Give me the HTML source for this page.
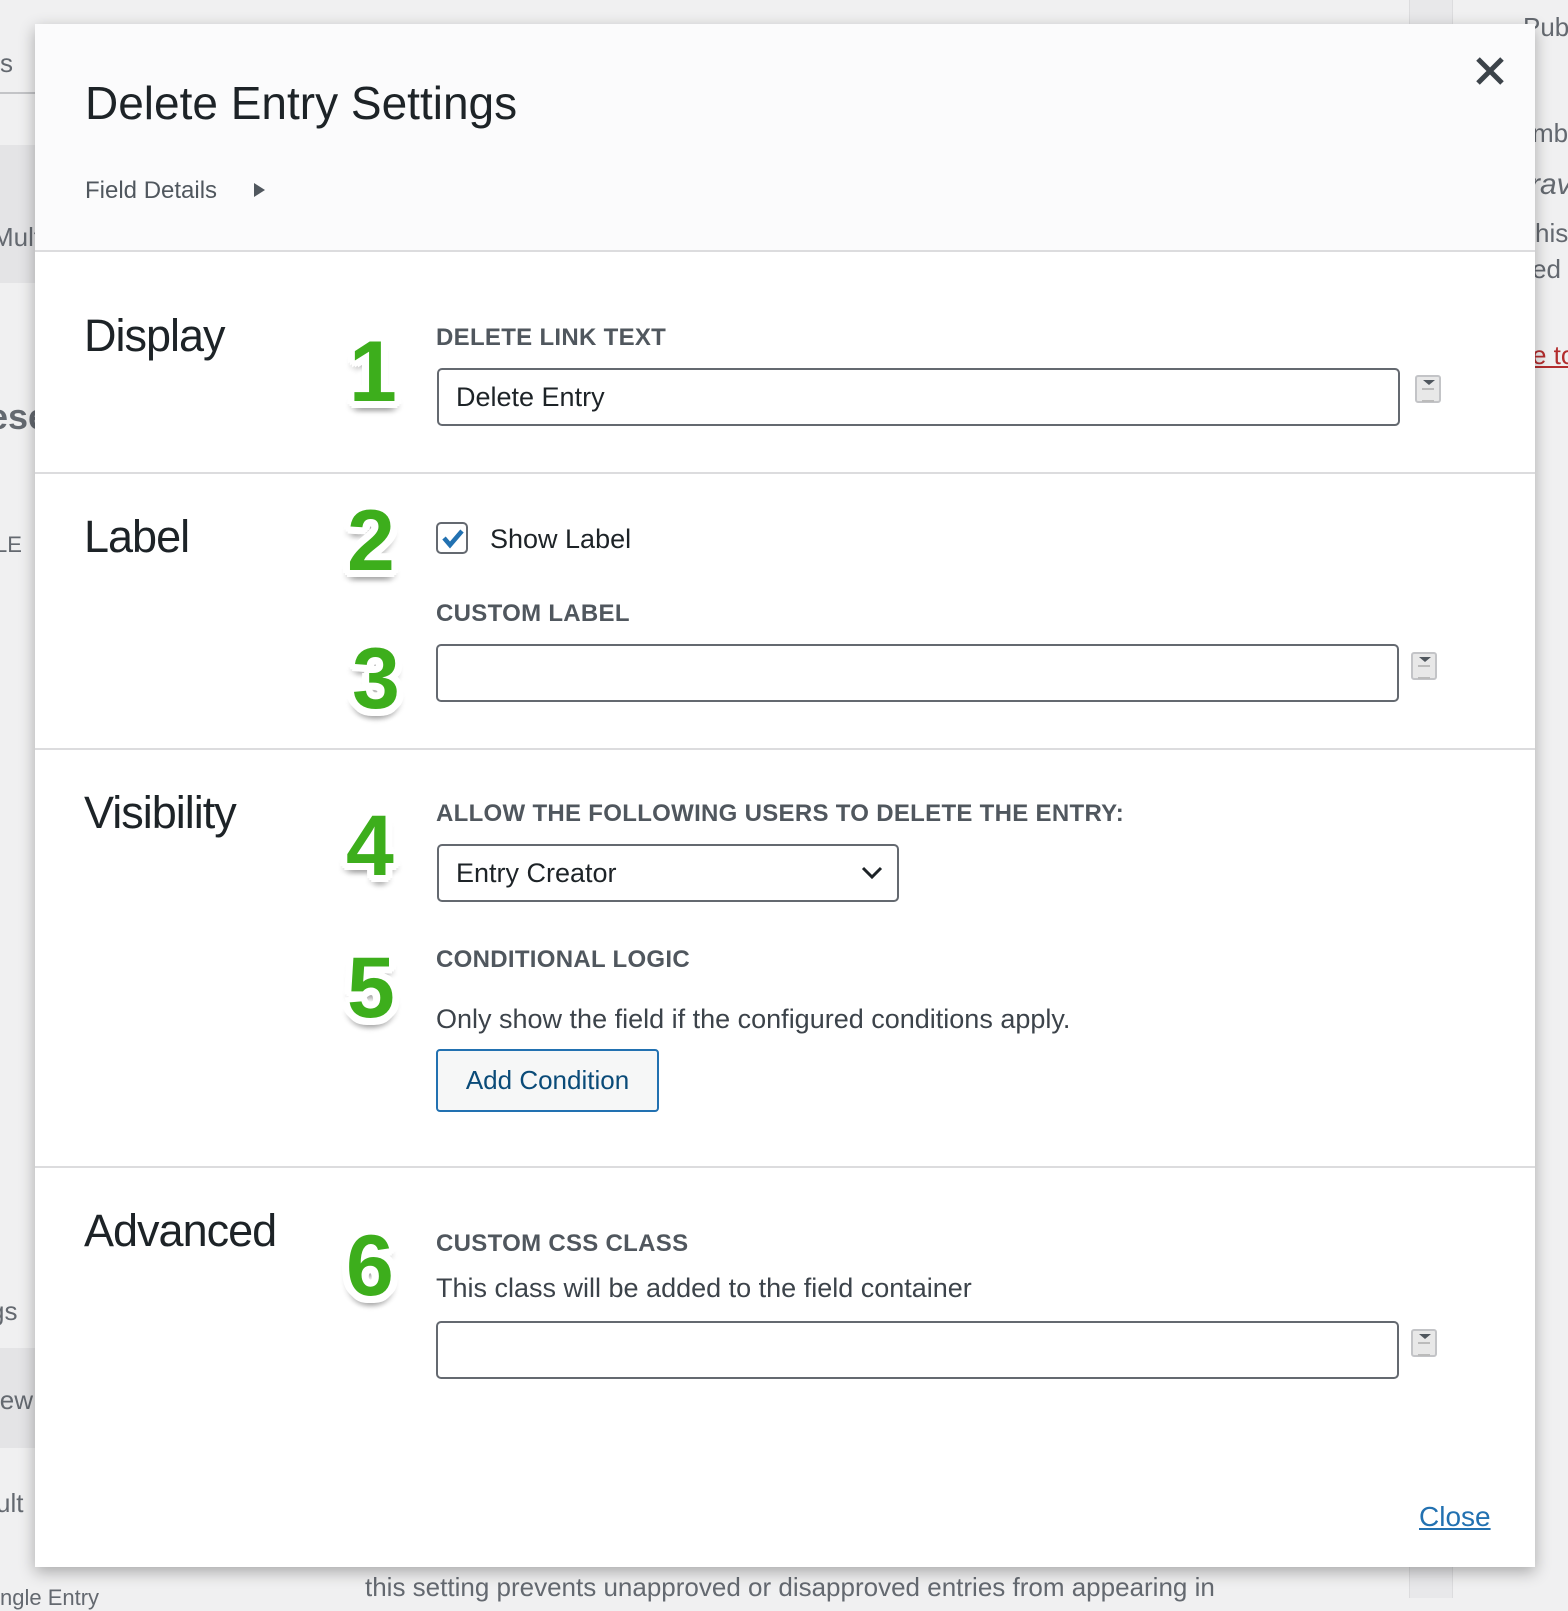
<!DOCTYPE html>
<html><head><meta charset="utf-8"><style>
*{box-sizing:border-box;margin:0;padding:0}
body{width:1568px;height:1598px;background:#f0f0f1;font-family:"Liberation Sans",sans-serif;position:relative;overflow:hidden;color:#1d2327}
.a{position:absolute;white-space:nowrap}
.bg{color:#646970;font-size:26px}
.modal{position:absolute;left:35px;top:24px;width:1500px;height:1543px;background:#fff;box-shadow:0 5px 15px rgba(0,0,0,.3)}
.hdr{position:absolute;left:0;top:0;width:1500px;height:228px;background:#fbfbfc;border-bottom:2px solid #dcdcde}
.sec{font-size:45px;font-weight:300;color:#1d2327;letter-spacing:-1px}
.lbl{font-size:24px;font-weight:bold;color:#50575e;letter-spacing:.3px}
.inp{position:absolute;border:2px solid #646970;border-radius:5px;background:#fff;height:58px}
.num{position:absolute;font-size:86px;font-weight:bold;color:#3dae1c;line-height:1;
text-shadow:7px 0 0 #fff,-7px 0 0 #fff,0 7px 0 #fff,0 -7px 0 #fff,5px 5px 0 #fff,-5px 5px 0 #fff,5px -5px 0 #fff,-5px -5px 0 #fff,3px 7px 0 #fff,-3px 7px 0 #fff,7px 3px 0 #fff,-7px 3px 0 #fff,0 11px 5px rgba(0,0,0,.18),5px 9px 5px rgba(0,0,0,.12),-5px 9px 5px rgba(0,0,0,.12)}
.sep{position:absolute;left:0;width:1500px;height:2px;background:#dcdcde}
.ico{position:absolute;width:26px;height:28px;border:2px solid #c3c4c7;border-radius:3px;background:#e8e8e8}
.ico:before{content:"";position:absolute;left:6px;top:3px;border-left:6px solid transparent;border-right:6px solid transparent;border-top:5px solid #50575e}
.ico:after{content:"";position:absolute;left:5px;top:11px;width:12px;height:10px;border-top:2px solid #bbb;border-bottom:2px solid #bbb}
</style></head><body>
<div class="a bg" style="left:0;top:48px">s</div>
<div style="position:absolute;left:0;top:92px;width:35px;height:2px;background:#c3c4c7"></div>
<div style="position:absolute;left:0;top:145px;width:35px;height:138px;background:#e4e4e6"></div>
<div class="a bg" style="left:-8px;top:222px">Mult</div>
<div class="a bg" style="left:-12px;top:396px;font-weight:bold;font-size:36px">ese</div>
<div class="a bg" style="left:-5px;top:532px;font-size:22px">LE</div>
<div class="a bg" style="left:-10px;top:1296px">gs</div>
<div style="position:absolute;left:0;top:1348px;width:35px;height:100px;background:#e4e4e6"></div>
<div class="a bg" style="left:-6px;top:1385px">iew</div>
<div class="a bg" style="left:-4px;top:1488px">ult</div>
<div style="position:absolute;left:1409px;top:0;width:44px;height:1598px;background:#e8e8ea;border-left:1px solid #dcdcde;border-right:1px solid #dcdcde"></div>
<div class="a bg" style="left:1523px;top:12px">Pub</div>
<div class="a bg" style="left:1532px;top:118px">mb</div>
<div class="a bg" style="left:1530px;top:168px;font-style:italic;font-size:30px">rav</div>
<div class="a bg" style="left:1535px;top:218px">his</div>
<div class="a bg" style="left:1532px;top:254px">ed t</div>
<div class="a" style="left:1532px;top:340px;font-size:26px;color:#b32d2e;text-decoration:underline">e to</div>
<div class="a bg" style="left:365px;top:1572px">this setting prevents unapproved or disapproved entries from appearing in</div>
<div class="a bg" style="left:0;top:1585px;font-size:22px">ngle Entry</div>

<div class="modal">
<div class="hdr">
<div class="a" style="left:50px;top:52px;font-size:46px;color:#1d2327">Delete Entry Settings</div>
<div class="a" style="left:50px;top:153px;font-size:24px;color:#50575e">Field Details</div>
<div class="a" style="left:219px;top:159px;width:0;height:0;border-top:7px solid transparent;border-bottom:7px solid transparent;border-left:11px solid #50575e"></div>
<svg class="a" style="left:1440px;top:32px" width="30" height="30" viewBox="0 0 30 30"><path d="M3 3L27 27M27 3L3 27" stroke="#3c434a" stroke-width="5"/></svg>
</div>

<div class="a sec" style="left:49px;top:286px">Display</div>
<div class="num" style="left:314px;top:305px">1</div>
<div class="a lbl" style="left:401px;top:300px">DELETE LINK TEXT</div>
<div class="inp" style="left:402px;top:344px;width:963px"><span class="a" style="left:17px;top:12px;font-size:27px;color:#1d2327">Delete Entry</span></div>
<div class="ico" style="left:1380px;top:351px"></div>
<div class="sep" style="top:448px"></div>

<div class="a sec" style="left:49px;top:487px">Label</div>
<div class="num" style="left:312px;top:474px">2</div>
<div style="position:absolute;left:401px;top:498px;width:32px;height:32px;border:2px solid #646970;border-radius:5px;background:#fff"></div>
<svg class="a" style="left:404px;top:500px" width="28" height="28" viewBox="0 0 28 28"><path d="M5 14L11 21L23 7" stroke="#2271b1" stroke-width="4.5" fill="none"/></svg>
<div class="a" style="left:455px;top:500px;font-size:27px;color:#1d2327">Show Label</div>
<div class="a lbl" style="left:401px;top:576px">CUSTOM LABEL</div>
<div class="num" style="left:317px;top:612px">3</div>
<div class="inp" style="left:401px;top:620px;width:963px"></div>
<div class="ico" style="left:1376px;top:628px"></div>
<div class="sep" style="top:724px"></div>

<div class="a sec" style="left:49px;top:763px">Visibility</div>
<div class="num" style="left:311px;top:779px">4</div>
<div class="a lbl" style="left:401px;top:776px">ALLOW THE FOLLOWING USERS TO DELETE THE ENTRY:</div>
<div class="inp" style="left:402px;top:820px;width:462px"><span class="a" style="left:17px;top:12px;font-size:27px;color:#1d2327">Entry Creator</span>
<svg class="a" style="left:422px;top:20px" width="22" height="14" viewBox="0 0 22 14"><path d="M2 2L11 11L20 2" stroke="#1d2327" stroke-width="3" fill="none"/></svg></div>
<div class="num" style="left:312px;top:921px">5</div>
<div class="a lbl" style="left:401px;top:922px">CONDITIONAL LOGIC</div>
<div class="a" style="left:401px;top:980px;font-size:27px;color:#3c434a">Only show the field if the configured conditions apply.</div>
<div style="position:absolute;left:401px;top:1025px;width:223px;height:63px;border:2px solid #2271b1;border-radius:4px;background:#f6f7f7;color:#0a4b78;font-size:26px;text-align:center;line-height:59px">Add Condition</div>
<div class="sep" style="top:1142px"></div>

<div class="a sec" style="left:49px;top:1181px">Advanced</div>
<div class="num" style="left:311px;top:1199px">6</div>
<div class="a lbl" style="left:401px;top:1206px">CUSTOM CSS CLASS</div>
<div class="a" style="left:401px;top:1249px;font-size:27px;color:#3c434a">This class will be added to the field container</div>
<div class="inp" style="left:401px;top:1297px;width:963px"></div>
<div class="ico" style="left:1376px;top:1305px"></div>

<div class="a" style="left:1384px;top:1477px;font-size:28px;color:#2271b1;text-decoration:underline">Close</div>
</div>
</body></html>
